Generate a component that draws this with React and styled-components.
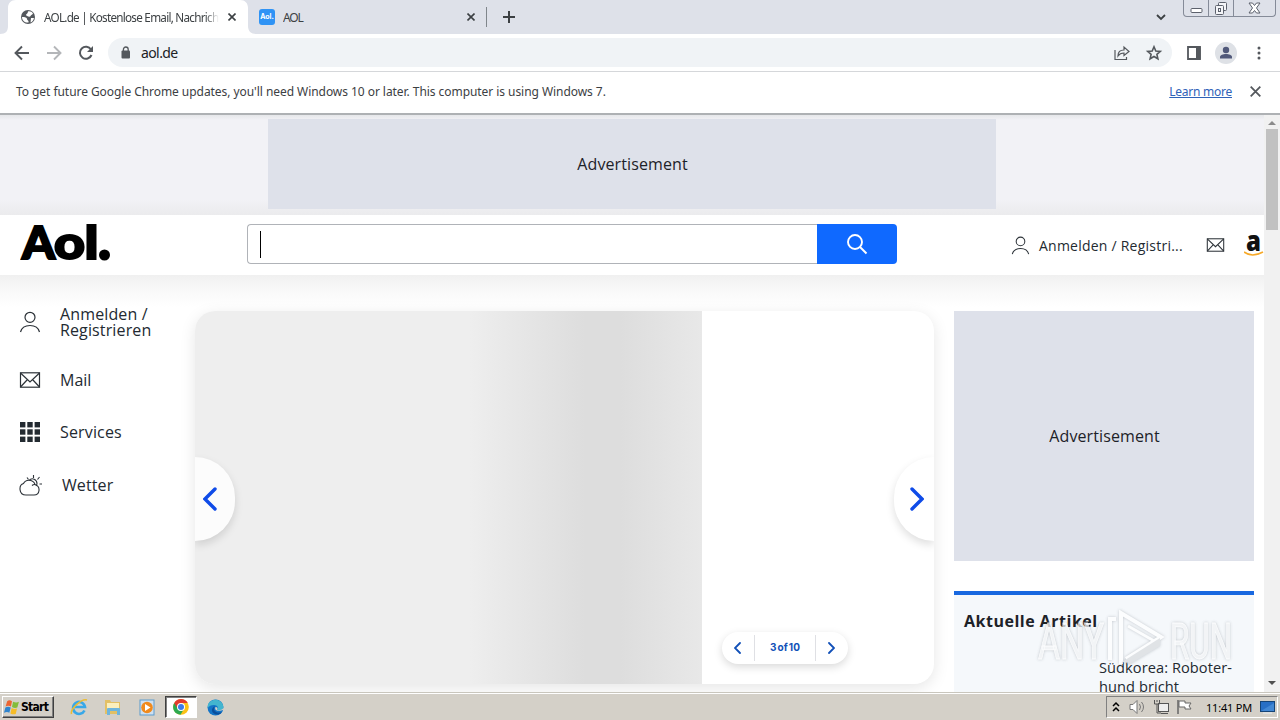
import React from 'react';
import styled, { createGlobalStyle, css } from 'styled-components';

const GlobalStyle = createGlobalStyle`
  * { box-sizing: border-box; }
  body {
    margin: 0;
    overflow: hidden;
    font-family: 'Open Sans', 'Noto Sans', sans-serif;
    color: #232a31;
  }
  svg { display: block; flex: none; }
`;

const ui = css`
  font-family: 'Noto Sans', 'DejaVu Sans', sans-serif;
`;

const Desktop = styled.div`
  width: 1280px;
  height: 720px;
  display: flex;
  flex-direction: column;
  overflow: hidden;
  background: #fff;
`;

// ---- browser chrome ----
const TabStrip = styled.div`
  height: 34px;
  display: flex;
  background: #dee1e9;
  flex: none;
`;

const Tab = styled.div`
  ${ui}
  width: ${(p) => (p.$active ? '248px' : '238px')};
  height: 34px;
  padding: ${(p) => (p.$active ? '0 12px 0 20px' : '0 11px 0 11px')};
  display: flex;
  align-items: center;
  font-size: 12px;
  color: #3c4043;
`;

const TabShape = styled(Tab)`
  position: relative;
  z-index: 0;
  > svg:first-child {
    position: absolute;
    left: 0;
    top: 0;
    z-index: -1;
  }
`;

const TabTitle = styled.div`
  width: ${(p) => p.$w}px;
  margin-left: 8px;
  overflow: hidden;
  white-space: nowrap;
  font-size: ${(p) => p.$size || 12}px;
  letter-spacing: ${(p) => p.$ls || 0}px;
  ${(p) => p.$fade && 'mask-image: linear-gradient(90deg, #000 92%, transparent);'}
`;

const AolFav = styled.div`
  width: 16px;
  height: 16px;
  border-radius: 3px;
  background: #2f93f5;
  color: #fff;
  font: bold 7px/16px Inter, sans-serif;
  text-align: center;
`;

const TabClose = styled.div`
  margin-left: auto;
`;

const Separator = styled.div`
  width: 1px;
  height: 20px;
  margin: 7px 16px 0 0;
  background: #80868b;
`;

const Spacer = styled.div`
  flex: 1;
`;

const WindowButtons = styled.div`
  width: 93px;
  height: 17px;
  margin: 0 4px 0 16px;
  display: flex;
  border: 1px solid #858b98;
  border-top: 0;
  border-radius: 0 0 4px 4px;
`;

const WindowButton = styled.div`
  width: ${(p) => p.$w}px;
  display: flex;
  align-items: center;
  justify-content: center;
  & + & { border-left: 1px solid #858b98; }
`;

const Toolbar = styled.div`
  height: 38px;
  display: flex;
  align-items: center;
  padding: 0 11px 0 12px;
  background: #fff;
  border-bottom: 1px solid #d5d7da;
  flex: none;
`;

const NavIcons = styled.div`
  display: flex;
  gap: 12px;
  width: 96px;
`;

const Omnibox = styled.div`
  ${ui}
  width: 1064px;
  flex: none;
  height: 29px;
  border-radius: 15px;
  background: #f0f3f6;
  display: flex;
  align-items: center;
  padding: 0 9px 0 12px;
  font-size: 14px;
  color: #202124;
  span { margin-left: 9px; letter-spacing: -0.6px; }
`;

const OmniActions = styled.div`
  display: flex;
  gap: 14px;
  margin-left: auto;
`;

const ToolIcons = styled.div`
  display: flex;
  align-items: center;
  margin-left: 13px;
  gap: 12px;
`;

const Avatar = styled.div`
  width: 22px;
  height: 22px;
  border-radius: 50%;
  background: #dee1e6;
  display: flex;
  align-items: center;
  justify-content: center;
`;

const InfoBar = styled.div`
  ${ui}
  height: 41px;
  padding: 0 19px 2px 16px;
  display: flex;
  align-items: center;
  background: #fff;
  font-size: 12px;
  color: #3c4043;
  flex: none;
  p { margin: 0; letter-spacing: -0.055px; }
`;

const LearnMore = styled.a`
  margin-left: auto;
  margin-right: 18px;
  color: #2f62b8;
  letter-spacing: -0.25px;
  text-decoration: underline;
`;

// ---- page ----
const Viewport = styled.div`
  height: 579px;
  display: flex;
  overflow: hidden;
  flex: none;
  border-top: 2px solid #aeb1b4;
`;

const Page = styled.div`
  width: 1264px;
  height: 577px;
  overflow: hidden;
  background: #fff;
`;

const TopAd = styled.div`
  height: 100px;
  padding: 4px 0 0 268px;
  background: linear-gradient(#e6e7ea, #f2f2f6 5px, #f2f2f6 84px, #ebebed);
`;

const AdBox = styled.div`
  width: ${(p) => p.$w}px;
  height: ${(p) => p.$h}px;
  display: flex;
  align-items: center;
  justify-content: center;
  padding-left: 1px;
  background: #dee1ea;
  font-size: 16px;
  letter-spacing: 0.1px;
  color: #1d2228;
`;

const Header = styled.header`
  height: 60px;
  display: flex;
  align-items: center;
  padding-left: 20px;
  background: #fff;
  > * { flex: none; }
`;

const Logo = styled.div`
  width: 227px;
  height: 60px;
`;

const SearchField = styled.div`
  width: 570px;
  height: 40px;
  margin-top: -2px;
  padding: 6px 12px;
  border: 1px solid #b0b3b8;
  border-right: 0;
  border-radius: 4px 0 0 4px;
`;

const Caret = styled.div`
  width: 1px;
  height: 27px;
  background: #000;
`;

const SearchButton = styled.div`
  width: 80px;
  height: 40px;
  margin-top: -2px;
  display: flex;
  align-items: center;
  justify-content: center;
  background: #0f69ff;
  border-radius: 0 4px 4px 0;
`;

const Account = styled.div`
  display: flex;
  align-items: center;
  margin-left: 114px;
  font-size: 14px;
  span {
    width: 167px;
    margin-left: 9px;
    letter-spacing: 0.23px;
  }
`;

const Amazon = styled.div`
  width: 20px;
  margin-left: 19px;
`;

const Content = styled.div`
  height: 417px;
  display: flex;
  padding-top: 36px;
  background: linear-gradient(#f0f0f0, #f8f8f8 14px, #fff 32px);
`;

const Sidebar = styled.nav`
  width: 195px;
  padding-left: 19px;
`;

const SideItem = styled.div`
  height: ${(p) => p.$h}px;
  display: flex;
  align-items: center;
  font-size: 16px;
  line-height: 16px;
  letter-spacing: ${(p) => p.$ls || 0}px;
  svg { margin-right: 19px; }
`;

const Carousel = styled.section`
  width: 739px;
  height: 373px;
  position: relative;
  display: flex;
  border-radius: 20px;
  background: #fff;
  box-shadow: 0 4px 16px rgba(0, 0, 0, 0.1);
`;

const Clip = styled.div`
  width: 739px;
  height: 373px;
  display: flex;
  overflow: hidden;
  border-radius: 20px;
  position: relative;
`;

const Skeleton = styled.div`
  width: 507px;
  background: linear-gradient(90deg, #eee 0, #eee 275px, #ddd 390px, #ddd 425px, #e8e8e8 507px);
`;

const Arrow = styled.div`
  position: absolute;
  top: 146px;
  ${(p) => (p.$right ? 'right: 0;' : 'left: 0;')}
  width: 40px;
  height: 84px;
  display: flex;
  align-items: center;
  padding-left: ${(p) => (p.$right ? 16 : 8)}px;
  border-radius: ${(p) => (p.$right ? '42px 0 0 42px' : '0 42px 42px 0')};
  background: ${(p) => (p.$right ? '#fff' : '#fcfcfc')};
  box-shadow: 0 4px 8px rgba(0, 0, 0, 0.13);
`;

const Pager = styled.div`
  position: absolute;
  left: 527px;
  top: 321px;
  width: 126px;
  height: 32px;
  display: flex;
  align-items: center;
  border-radius: 16px;
  background: #fff;
  box-shadow: 0 3px 8px rgba(0, 0, 0, 0.15);
  color: #1150b8;
`;

const PagerArrow = styled.div`
  width: 32px;
  padding-right: 2px;
  display: flex;
  justify-content: center;
`;

const PagerCount = styled.div`
  width: 62px;
  height: 26px;
  border: solid #dfe0e4;
  border-width: 0 1px;
  font: bold 10px/25px Inter, sans-serif;
  letter-spacing: 0.1px;
  word-spacing: -1.5px;
  text-align: center;
`;

const RightRail = styled.aside`
  width: 300px;
  margin-left: 20px;
`;

const Articles = styled.div`
  height: 110px;
  margin-top: 30px;
  padding: 15px 10px 0;
  border-top: 4px solid #1868e0;
  background: #f5f8fb;
`;

const ArticlesTitle = styled.h2`
  margin: 0;
  font-size: 16px;
  line-height: 22px;
  letter-spacing: 0.5px;
  font-weight: 700;
  color: #1d2228;
`;

const ArticleText = styled.p`
  margin: 26px 0 0 135px;
  font-size: 14.6px;
  line-height: 19px;
  letter-spacing: 0.07px;
  white-space: nowrap;
`;

const Scrollbar = styled.div`
  width: 16px;
  height: 577px;
  display: flex;
  flex-direction: column;
  align-items: center;
  background: #f1f1f1;
  padding: 5px 0 6px;
`;

const Thumb = styled.div`
  width: 12px;
  height: 101px;
  margin-top: 4px;
  background: #c1c1c1;
`;

// ---- taskbar ----
const Taskbar = styled.footer`
  ${ui}
  height: 28px;
  display: flex;
  align-items: flex-start;
  padding: 3px 2px 0;
  background: #d4d0c8;
  border-top: 1px solid #c9c6bd;
  box-shadow: inset 0 1px #fff;
  flex: none;
`;

const StartButton = styled.div`
  width: 52px;
  height: 22px;
  display: flex;
  align-items: center;
  padding-left: 1px;
  border: 1px solid;
  border-color: #fff #404040 #404040 #fff;
  box-shadow: inset -1px -1px #808080;
  font: bold 12px 'DejaVu Sans Condensed', 'DejaVu Sans', sans-serif;
  letter-spacing: -0.7px;
  color: #000;
  svg { margin-right: 1px; }
`;

const TaskIcon = styled.div`
  width: 32px;
  height: 22px;
  margin-left: ${(p) => p.$ml || 2}px;
  display: flex;
  align-items: center;
  justify-content: center;
  ${(p) => p.$pressed && css`
    background: #fff;
    border: 1px solid;
    border-color: #404040 #fff #fff #404040;
    box-shadow: inset 1px 1px #808080;
  `}
`;

const Tray = styled.div`
  width: 172px;
  height: 22px;
  margin-left: auto;
  padding: 0 1px 0 5px;
  display: flex;
  align-items: center;
  border: 1px solid;
  border-color: #808080 #fff #fff #808080;
  color: #000;
  font-size: 11px;
`;

const Clock = styled.span`
  width: 46px;
  margin: 0 8px 0 12px;
  white-space: nowrap;
  letter-spacing: -0.2px;
`;

const Watermark = styled.div`
  position: absolute;
  left: 1036px;
  top: 606px;
  filter: drop-shadow(0 0 1.5px rgba(90, 100, 110, 0.45));
  opacity: 0.75;
`;

const CloseX = ({ size = 8, color = '#3c4043', w = 1.6 }) => (
  <svg width={size} height={size} viewBox="0 0 8 8" stroke={color} strokeWidth={w} fill="none">
    <path d="M.5.5l7 7M7.5.5l-7 7" />
  </svg>
);

const Chevron = ({ w, h, right, stroke, color }) => (
  <svg width={w} height={h} viewBox="0 0 14 24" fill="none" stroke={color} strokeWidth={stroke} strokeLinecap="round" strokeLinejoin="miter">
    <path d={right ? 'M2 2l10 10L2 22' : 'M12 2L2 12l10 10'} />
  </svg>
);

const Person = ({ size }) => (
  <svg width={size} height={size} viewBox="0 0 22 22" fill="none" stroke="#2c3238" strokeWidth="1.2">
    <circle cx="11" cy="6.3" r="5" />
    <path d="M1.500 21c1-4 4.500-6.500 9.500-6.500s8.500 2.500 9.500 6.500" />
  </svg>
);

const Envelope = ({ w, h }) => (
  <svg width={w} height={h} viewBox="0 0 22 16" fill="none" stroke="#2c3238" strokeWidth="1.200">
    <rect x="1.500" y=".8" width="19" height="14.400" />
    <path d="M1.500 1l9.500 9 9.500-9M1.500 15l7-7.500M20.500 15l-7-7.500" />
  </svg>
);

const BrowserTop = () => (
  <>
    <TabStrip>
      <TabShape $active>
        <svg width="256" height="34" fill="#fff">
          <path d="M0 34c6 0 8-3 8-8V8c0-5 3-8 8-8h224c5 0 8 3 8 8v18c0 5 3 8 8 8z" />
        </svg>
        <svg width="16" height="16" viewBox="0 0 16 16">
          <circle cx="8" cy="8" r="7" fill="#54585d" />
          <path d="M2 8c3 0 5 .5 5 2s2 1 1.500 3.500C5 14 2 11.500 2 8zM8 2.500c2-.5 4 .5 5 2-.5 1.500-2 1-2.500 2.500S6 7 6 6s2-1.500 2-3.500zM11 9h3c-.5 2.500-2 4-3.500 4.500z" fill="#fff" />
        </svg>
        <TabTitle $w={175} $fade $size={11.7} $ls={-0.74}>AOL.de | Kostenlose Email, Nachrichten</TabTitle>
        <TabClose><CloseX /></TabClose>
      </TabShape>
      <Tab>
        <AolFav>Aol.</AolFav>
        <TabTitle $w={100} $ls={-1.1}>AOL</TabTitle>
        <TabClose><CloseX /></TabClose>
      </Tab>
      <Separator />
      <svg width="12" height="34" stroke="#3c4043" strokeWidth="2"><path d="M0 17h12M6 11v12" /></svg>
      <Spacer />
      <svg width="12" height="34" stroke="#3c4043" strokeWidth="1.800" fill="none"><path d="M2 15l4 4 4-4" /></svg>
      <WindowButtons>
        <WindowButton $w={25}>
          <svg width="13" height="16" fill="#fff" stroke="#5c616c"><rect x="1" y="8.500" width="11" height="4" rx="1" /></svg>
        </WindowButton>
        <WindowButton $w={25}>
          <svg width="14" height="15" fill="#f4f5f8" stroke="#5c616c">
            <rect x="4.500" y="1.500" width="8" height="8" rx="1" />
            <rect x="1.500" y="4.500" width="8" height="9" rx="1" />
            <rect x="4.500" y="7.500" width="2" height="3" />
          </svg>
        </WindowButton>
        <WindowButton $w={43}>
          <svg width="13" height="12" fill="#fff" stroke="#5c616c"><path d="M1 1h3.500l2 2.500 2-2.500H12L8.500 6l3.500 5H8.500l-2-2.500-2 2.500H1l3.500-5z" /></svg>
        </WindowButton>
      </WindowButtons>
    </TabStrip>
    <Toolbar>
      <NavIcons>
        <svg width="20" height="20" viewBox="0 0 20 20" fill="none" stroke="#54585d" strokeWidth="1.900"><path d="M17 10H4M10 3.500L3.500 10l6.500 6.500" /></svg>
        <svg width="20" height="20" viewBox="0 0 20 20" fill="none" stroke="#b4b6b9" strokeWidth="1.900"><path d="M3 10h13M10 3.500l6.500 6.500-6.500 6.500" /></svg>
        <svg width="20" height="20" viewBox="0 0 20 20" fill="none" stroke="#54585d" strokeWidth="2"><path d="M15.500 12A6 6 0 1 1 15 6.500" /><path d="M17 3v6h-6z" fill="#54585d" stroke="none" /></svg>
      </NavIcons>
      <Omnibox>
        <svg width="12" height="14" viewBox="0 0 12 14"><rect x="1.500" y="4.500" width="8.500" height="8" rx="1" fill="#54585d" /><path d="M3.400 5V3.400a2.400 2.400 0 0 1 4.800 0V5" fill="none" stroke="#54585d" strokeWidth="1.300" /></svg>
        <span>aol.de</span>
        <OmniActions>
          <svg width="18" height="18" viewBox="0 0 18 18" fill="none" stroke="#54585d" strokeWidth="1.200"><path d="M2 6v9.500h11.500V13M5 12c0-4 2-6 6-6V3l5 4.500-5 4V9c-3 0-4.500.7-6 3z" /></svg>
          <svg width="18" height="18" viewBox="0 0 18 18" fill="none" stroke="#54585d" strokeWidth="1.600"><path d="M9 2.800l1.800 4.200 4.500.4-3.400 3 1 4.400L9 12.500l-3.900 2.300 1-4.400-3.400-3 4.500-.4z" /></svg>
        </OmniActions>
      </Omnibox>
      <ToolIcons>
        <svg width="18" height="18" viewBox="0 0 18 18"><path d="M3 3h12v12H3z" fill="none" stroke="#54585d" strokeWidth="1.800" /><path d="M11 3h4.500v12H11z" fill="#54585d" /></svg>
        <Avatar>
          <svg width="12" height="13" fill="#51597a"><circle cx="6" cy="4" r="3.200" /><path d="M0 12.500V11c0-2 3-3 6-3s6 1 6 3v1.500z" /></svg>
        </Avatar>
        <svg width="20" height="18" fill="#54585d"><circle cx="10" cy="4" r="1.500" /><circle cx="10" cy="9" r="1.500" /><circle cx="10" cy="14" r="1.500" /></svg>
      </ToolIcons>
    </Toolbar>
    <InfoBar>
      <p>To get future Google Chrome updates, you'll need Windows 10 or later. This computer is using Windows 7.</p>
      <LearnMore>Learn more</LearnMore>
      <CloseX size={11} color="#54585d" w={1.3} />
    </InfoBar>
  </>
);

const AolPage = () => (
  <Page>
    <TopAd><AdBox $w={728} $h={90}>Advertisement</AdBox></TopAd>
    <Header>
      <Logo>
        <svg width="100" height="60">
          <g fontFamily="Lato, sans-serif" fontSize="45" fontWeight="900" fill="#000" stroke="#000" strokeWidth="2">
            <text x="2" y="44" textLength="33" lengthAdjust="spacingAndGlyphs">A</text>
            <text x="34" y="44" textLength="31" lengthAdjust="spacingAndGlyphs">o</text>
            <text x="64.500" y="44" textLength="14" lengthAdjust="spacingAndGlyphs">l</text>
          </g>
          <circle cx="84.500" cy="40" r="5.500" />
        </svg>
      </Logo>
      <SearchField><Caret /></SearchField>
      <SearchButton>
        <svg width="22" height="22" fill="none" stroke="#fff" strokeWidth="1.900"><circle cx="9" cy="9" r="7" /><path d="M14 14l6.500 6.500" /></svg>
      </SearchButton>
      <Account>
        <Person size={19} />
        <span>Anmelden / Registri...</span>
        <Envelope w={19} h={14} />
      </Account>
      <Amazon>
        <svg width="20" height="24">
          <text x="2" y="18" fontFamily="Open Sans, sans-serif" fontSize="28" fontWeight="800" textLength="15" lengthAdjust="spacingAndGlyphs" fill="#111">a</text>
          <path d="M0 19c5 3.800 12 3.800 19 0" fill="none" stroke="#f7a928" strokeWidth="1.600" />
        </svg>
      </Amazon>
    </Header>
    <Content>
      <Sidebar>
        <SideItem $h={22} $ls={0.13}><Person size={22} />Anmelden /<br />Registrieren</SideItem>
        <SideItem $h={94}><Envelope w={22} h={16} />Mail</SideItem>
        <SideItem $h={10} $ls={0.15}>
          <svg width="22" height="20" fill="#232a31">
            {[0, 1, 2].map((r) => [0, 1, 2].map((c) => <rect key={`${r}${c}`} x={1 + c * 7.3} y={r * 7.3} width="5.400" height="5.400" />))}
          </svg>
          Services
        </SideItem>
        <SideItem $h={96} $ls={0.1}>
          <svg width="24" height="22" viewBox="0 0 24 22" fill="none" stroke="#2c3238" strokeWidth="1.100">
            <path d="M7 21C-.5 21-.5 11 4.500 9.500c2.500-5 10-4 11.500 1 6 2 5 10.500-1 10.500z" />
            <path d="M10 6.500c3-3.500 8-1 8 3 0 1-.5 1.800-1 2.300M14.500 4V1M18.500 5.500l2-2.500M20.500 10H23M9.500 5.500L8 3.500M16 10.500q-2 0-3 1" />
          </svg>
          Wetter
        </SideItem>
      </Sidebar>
      <Carousel>
        <Clip>
          <Skeleton />
          <Arrow><Chevron w={14} h={24} stroke={3.4} color="#0f4be8" /></Arrow>
          <Arrow $right><Chevron right w={14} h={24} stroke={3.4} color="#0f4be8" /></Arrow>
        </Clip>
        <Pager>
          <PagerArrow><Chevron w={7} h={12} stroke={3.6} color="#1150b8" /></PagerArrow>
          <PagerCount>3 of 10</PagerCount>
          <PagerArrow><Chevron right w={7} h={12} stroke={3.6} color="#1150b8" /></PagerArrow>
        </Pager>
      </Carousel>
      <RightRail>
        <AdBox $w={300} $h={250}>Advertisement</AdBox>
        <Articles>
          <ArticlesTitle>Aktuelle Artikel</ArticlesTitle>
          <ArticleText>Südkorea: Roboter-<br />hund bricht</ArticleText>
        </Articles>
      </RightRail>
    </Content>
  </Page>
);

const TaskbarRow = () => (
  <Taskbar>
    <StartButton>
      <svg width="16" height="16" viewBox="0 0 15 15">
        <path d="M3 2q2-1.500 4.500 0L6.500 7Q4 5.500 1.500 7z" fill="#ec6532" />
        <path d="M8.500 2.500q3 1.500 5.500 0L12.500 8Q10 9 7.500 7.500z" fill="#83bc3b" />
        <path d="M1.300 8q2.500-1.500 5 0L5 13Q3 11.500 0 13z" fill="#2f84ce" />
        <path d="M7.200 8.500q2.500 1.500 5 .5L11 14q-2.500 1-5-.5z" fill="#f6bc27" />
      </svg>
      Start
    </StartButton>
    <TaskIcon $ml={9}>
      <svg width="18" height="18" viewBox="0 0 18 18" fill="none">
        <path d="M14.500 12.500A6 6 0 1 1 15 9H5" stroke="#38a8e8" strokeWidth="2.600" />
        <path d="M1.500 16C0 11 12 0 17 2" stroke="#ecbc32" strokeWidth="1.500" />
      </svg>
    </TaskIcon>
    <TaskIcon>
      <svg width="18" height="18" viewBox="0 0 18 18">
        <path d="M1 2h5l1 2h9v12H1z" fill="#e3c064" /><path d="M3 5h12v8H3z" fill="#fbefbd" />
        <path d="M3 17v-6q0-1 1-1h11q1 0 1 1v6h-3v-4H6v4z" fill="#6eb5dd" />
      </svg>
    </TaskIcon>
    <TaskIcon>
      <svg width="17" height="17" viewBox="0 0 17 17">
        <rect x="1" y="1" width="14" height="15" fill="#cfe0f0" stroke="#5b9bce" /><circle cx="8" cy="8.500" r="5.800" fill="#f08a1d" /><path d="M6 5l5.500 3.500L6 12z" fill="#fff" />
      </svg>
    </TaskIcon>
    <TaskIcon $pressed>
      <svg width="16" height="16" viewBox="0 0 16 16">
        <circle cx="8" cy="8" r="7.800" fill="#fbc116" />
        <path d="M8 8L1.200 4A7.800 7.800 0 0 0 7.500 15.800L11.500 9z" fill="#2da94f" />
        <path d="M8 4h6.800A7.800 7.800 0 0 0 1.200 4L4.500 9.500z" fill="#e33b2e" />
        <circle cx="8" cy="8" r="4" fill="#fff" /><circle cx="8" cy="8" r="3" fill="#3c7bea" />
      </svg>
    </TaskIcon>
    <TaskIcon>
      <svg width="17" height="17" viewBox="0 0 17 17">
        <circle cx="8.500" cy="8.500" r="8" fill="#1474c7" />
        <path d="M.7 7C2-1 15-2 16.500 8c0 3-4 4-6.500 3 2-3 0-5-3-5-3 0-5 1-6.300 3z" fill="#43b5cf" />
        <path d="M8 7c-3 4 1 8 7 6-3 4-9 3-10-1-.5-2 1-4 3-5z" fill="#0b4e9b" />
        <path d="M8.500 8c-1.500 3 2 5 8 3l.5-3c-1 3-5 3.500-7 3 1-1.500.5-3-1.500-3z" fill="#d4d0c8" />
      </svg>
    </TaskIcon>
    <Tray>
      <svg width="8" height="12" fill="none" stroke="#000" strokeWidth="1.500"><path d="M1 5l3-3 3 3M1 10l3-3 3 3" /></svg>
      <svg width="18" height="16" viewBox="0 0 18 16" fill="#fff" stroke="#777" style={{ marginLeft: 9 }}><path d="M1 5.500h3L8 1.500v13L4 10.500H1z" /><path d="M10.500 5q2 3 0 6M12.500 3q4 5 0 10" fill="none" /></svg>
      <svg width="17" height="16" viewBox="0 0 17 16" fill="#eee" stroke="#555" style={{ marginLeft: 6 }}><rect x="5.500" y="4.500" width="10" height="8" /><path d="M1.500 1v4h5V1M4 1v2M4 5v9h4M8 14.500h7" fill="none" /></svg>
      <svg width="18" height="16" viewBox="0 0 18 16" fill="#fff" stroke="#666" style={{ marginLeft: 6 }}><path d="M2 15V1" strokeWidth="1.500" /><path d="M3 2h6v2h6l-2 3 2 3H9V8H3z" /></svg>
      <Clock>11:41 PM</Clock>
      <svg width="15" height="14"><rect x=".5" y="1.500" width="14" height="10" fill="#286fc5" stroke="#154477" /><path d="M1 11L14 3v8z" fill="#4388d4" /><path d="M3 13h9" stroke="#e8edf2" /></svg>
    </Tray>
  </Taskbar>
);

export default function App() {
  return (
    <Desktop>
      <GlobalStyle />
      <BrowserTop />
      <Viewport>
        <AolPage />
        <Scrollbar>
          <svg width="8" height="5" fill="#8b8b8b"><path d="M0 5l4-4 4 4z" /></svg>
          <Thumb />
          <Spacer />
          <svg width="8" height="5" fill="#505050"><path d="M0 0l4 4 4-4z" /></svg>
        </Scrollbar>
      </Viewport>
      <TaskbarRow />
      <Watermark>
        <svg width="200" height="66" fill="none" stroke="#fff">
          <g fontFamily="Roboto, sans-serif" fontSize="50" fontWeight="400" fill="#f1f3f5" strokeWidth="0.800">
            <text x="2" y="53" textLength="66" lengthAdjust="spacingAndGlyphs">ANY</text>
            <text x="134" y="53" textLength="62" lengthAdjust="spacingAndGlyphs">RUN</text>
          </g>
          <path d="M85 58V7l40 24-35 22" strokeWidth="4" />
          <path d="M92 20l28 16" strokeWidth="3" />
          <path d="M74 54V13h6" strokeWidth="4" />
          <path d="M86 56l38-24v8L94 58z" fill="#d9dde0" stroke="none" />
        </svg>
      </Watermark>
    </Desktop>
  );
}
